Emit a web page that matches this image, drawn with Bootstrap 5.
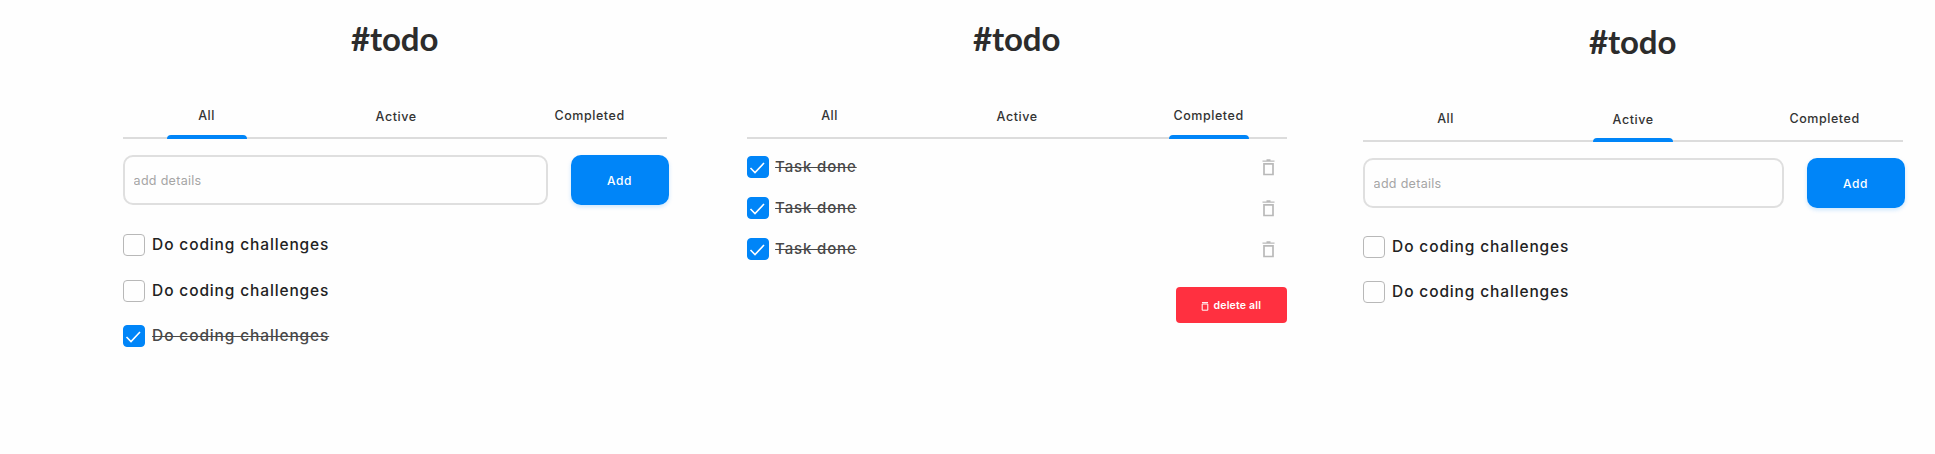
<!DOCTYPE html>
<html lang="en">
<head>
<meta charset="utf-8">
<meta name="viewport" content="width=device-width, initial-scale=1">
<title>#todo</title>
<link href="https://cdn.jsdelivr.net/npm/bootstrap@5.3.0/dist/css/bootstrap.min.css" rel="stylesheet">
<style>
  body { font-family: Inter, "Open Sans", sans-serif; background: #fefefe; color: #222; min-height: 454px; overflow: hidden; }
  .boards { padding-left: 122.6px; padding-top: 14px; }
  .board { width: 540px; flex: none; }
  .board-all { width: 544px; margin-right: 80px; }
  .board-completed { margin-right: 76px; }
  .board-active { padding-top: 3px; }
  .board-title { font: 700 33px/48px Lato, sans-serif; letter-spacing: -.1px; color: #2c2c2c; margin: 0 0 40px; }
  .tabs { height: 37px; padding: 0 37px 0 44px; border-bottom: 2px solid #dcdcdc; }
  .board-completed .tabs, .board-active .tabs { padding: 0 38px 0 43px; }
  .tabs .nav-link { width: 80px; height: 37px; padding: 4px 0 0; font-size: 12.5px; line-height: 20px; font-weight: 500; letter-spacing: .55px; color: #333; text-align: center; white-space: nowrap; border: 0; }
  .tabs .middle { padding-top: 5px; }
  .tabs .active::after { content: ""; display: block; height: 4px; margin-top: 9px; background: #0085f8; border-radius: 4px 4px 0 0; }
  .tabs .middle.active::after { margin-top: 8px; }
  .add-form { margin-top: 16px; height: 50px; gap: 22.5px; margin-right: -2px; }
  .add-form .form-control { border: 2px solid #dfdfdf; border-radius: 10px; padding: 3px 9px 0; font-size: 12.5px; letter-spacing: .3px; background: transparent; }
  .add-form .form-control::placeholder { color: #a5a5a5; }
  .add-form .btn { width: 98px; flex: none; background: #0085f8; border: 0; border-radius: 10px; padding: 8px 0 6px; font-size: 12px; font-weight: 500; color: #fff; box-shadow: 0 2px 4px rgba(0,133,248,.2); letter-spacing: .6px; }
  .task-list { margin: 29px 0 0; gap: 23.7px; }
  .board-active .task-list { margin-top: 28px; gap: 23.4px; }
  .task { height: 22px; gap: 7px; font-size: 15.5px; font-weight: 500; line-height: 22px; letter-spacing: .86px; }
  .task .form-check-input { width: 22.5px; height: 22px; margin: 0; border: 1.5px solid #b8b8b8; border-radius: 4px; flex: none; background-color: transparent; }
  .task .form-check-input:checked { background-color: #0085f8; border-color: #0085f8; background-size: 19px 19px;
    background-image: url("data:image/svg+xml,%3Csvg xmlns='http://www.w3.org/2000/svg' viewBox='0 0 19 19'%3E%3Cpath d='M2.5 10l4.5 4.5L16 5' fill='none' stroke='%23fff' stroke-width='1.6'/%3E%3C/svg%3E"); }
  .done { color: #484848; text-decoration: line-through; text-decoration-thickness: 1px; }
  .board-completed .task-list { margin-top: 17px; gap: 19px; }
  .board-completed .task { font-size: 15px; gap: 6px; }
  .trash { width: 13px; height: 17px; margin-right: 11.5px; color: #b9b9b9; }
  .btn-delete { width: 110.5px; height: 36px; margin-top: 27.3px; padding: 2px 0 0; background: #ff3040; border: 0; border-radius: 4px; color: #fff; font-size: 10.5px; font-weight: 600; letter-spacing: .2px; gap: 4px; }
</style>
</head>
<body>
<svg class="d-none" xmlns="http://www.w3.org/2000/svg">
  <symbol id="bin" viewBox="0 0 13 17"><path d="M4.5 1h4M.5 2.2h12" stroke="currentColor" stroke-width="1.3"/><path d="M2 4.8h9v10.7H2z" fill="none" stroke="currentColor" stroke-width="1.7"/></symbol>
</svg>
<main class="boards d-flex align-items-start">
  <section class="board board-all">
    <h1 class="board-title text-center">#todo</h1>
    <nav class="nav tabs flex-nowrap justify-content-between">
      <a class="nav-link active" href="#">All</a>
      <a class="nav-link middle me-1" href="#">Active</a>
      <a class="nav-link" href="#">Completed</a>
    </nav>
    <form class="add-form d-flex">
      <input class="form-control" type="text" placeholder="add details">
      <button class="btn" type="button">Add</button>
    </form>
    <div class="task-list d-flex flex-column">
      <label class="task d-flex align-items-center"><input class="form-check-input" type="checkbox"><span>Do coding challenges</span></label>
      <label class="task d-flex align-items-center"><input class="form-check-input" type="checkbox"><span>Do coding challenges</span></label>
      <label class="task d-flex align-items-center"><input class="form-check-input" type="checkbox" checked><span class="done">Do coding challenges</span></label>
    </div>
  </section>

  <section class="board board-completed">
    <h1 class="board-title text-center">#todo</h1>
    <nav class="nav tabs flex-nowrap justify-content-between">
      <a class="nav-link" href="#">All</a>
      <a class="nav-link middle me-1" href="#">Active</a>
      <a class="nav-link active" href="#">Completed</a>
    </nav>
    <div class="task-list d-flex flex-column">
      <label class="task d-flex align-items-center"><input class="form-check-input" type="checkbox" checked><span class="done">Task done</span><svg class="trash ms-auto"><use href="#bin"/></svg></label>
      <label class="task d-flex align-items-center"><input class="form-check-input" type="checkbox" checked><span class="done">Task done</span><svg class="trash ms-auto"><use href="#bin"/></svg></label>
      <label class="task d-flex align-items-center"><input class="form-check-input" type="checkbox" checked><span class="done">Task done</span><svg class="trash ms-auto"><use href="#bin"/></svg></label>
    </div>
    <button class="btn btn-delete d-flex align-items-center justify-content-center ms-auto" type="button">
      <svg width="8" height="10" viewBox="0 0 8 10"><path d="M1.2 3h5.6v6.2H1.2zM1 1.6h6" fill="none" stroke="#fff"/></svg>delete all
    </button>
  </section>

  <section class="board board-active">
    <h1 class="board-title text-center">#todo</h1>
    <nav class="nav tabs flex-nowrap justify-content-between">
      <a class="nav-link" href="#">All</a>
      <a class="nav-link middle active me-1" href="#">Active</a>
      <a class="nav-link" href="#">Completed</a>
    </nav>
    <form class="add-form d-flex">
      <input class="form-control" type="text" placeholder="add details">
      <button class="btn" type="button">Add</button>
    </form>
    <div class="task-list d-flex flex-column">
      <label class="task d-flex align-items-center"><input class="form-check-input" type="checkbox"><span>Do coding challenges</span></label>
      <label class="task d-flex align-items-center"><input class="form-check-input" type="checkbox"><span>Do coding challenges</span></label>
    </div>
  </section>
</main>
<script src="https://cdn.jsdelivr.net/npm/bootstrap@5.3.0/dist/js/bootstrap.bundle.min.js"></script>
</body>
</html>
